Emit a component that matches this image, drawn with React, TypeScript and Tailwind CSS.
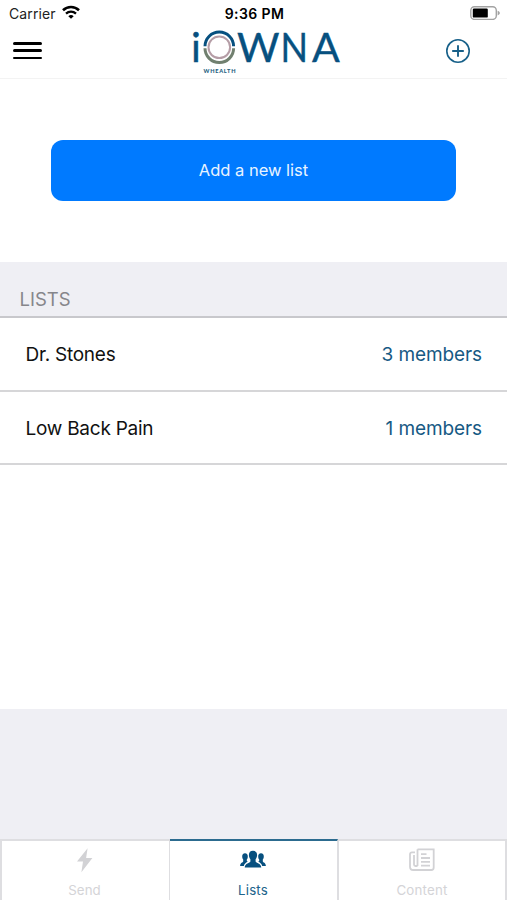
const StatusBar = () => {
  return (
    <div className="grid grid-cols-3 items-center h-[27px] pl-[9px] pr-[7px] text-[14px] text-[#222]">
      <div className="flex items-center gap-[6px]">
        <span className="tracking-[0.1px]">Carrier</span>
        <svg width="18" height="14" viewBox="0 0 18 14" className="-mt-[3px]" fill="none" stroke="#000">
          <path d="M1 5.2a11.6 11.6 0 0 1 16 0" strokeWidth="2.6" />
          <path d="M4 8.6a7.4 7.4 0 0 1 10 0" strokeWidth="2.3" />
          <path d="M9 13.8 6.3 11.2a4 4 0 0 1 5.4 0z" fill="#000" stroke="none" />
        </svg>
      </div>
      <div className="text-center font-semibold text-black tracking-[0.4px]">9:36 PM</div>
      <div className="flex justify-end">
        <svg width="30" height="14" viewBox="0 0 30 14" className="-mt-[2px]">
          <rect x="0.8" y="0.8" width="25.5" height="12.6" rx="3.6" fill="#fff" stroke="#a3a3a3" strokeWidth="1.4" />
          <rect x="2.8" y="2.6" width="15" height="9" rx="1.2" fill="#000" />
          <path d="M27.6 4.8c1.7.5 2.2 1.4 2.2 2.3s-.5 1.8-2.2 2.3z" fill="#a3a3a3" />
        </svg>
      </div>
    </div>
  )
}

const Logo = () => {
  return (
    <svg width="152" height="60" viewBox="0 -9 152 60" className="font-['Lato']">
      <g fill="#07507f" stroke="#07507f" strokeWidth="0.4" fontSize="41">
        <text x="0.1" y="33">i</text>
        <text x="46" y="33">W</text>
        <text x="89.5" y="33" textLength="27.5" lengthAdjust="spacingAndGlyphs">N</text>
        <text x="121" y="33">A</text>
      </g>
      <g fill="none">
        <path d="M14 17.3a14.3 14.3 0 0 1 28.6 0" stroke="#07507f" strokeWidth="3" />
        <path d="M14 19.3a14.3 14.3 0 0 0 28.6 0" stroke="#71806f" strokeWidth="3" />
        <circle cx="28.3" cy="18.3" r="10.8" stroke="#b59da6" strokeWidth="2" />
      </g>
      <text x="12.5" y="44.4" fontSize="5.6" fontWeight="900" fill="#246080" textLength="32">WHEALTH</text>
    </svg>
  )
}

const Header = () => {
  return (
    <div className="flex justify-between h-[52px] border-b border-[#f3f3f3] pl-[13px] pr-[36px]">
      <div className="flex flex-col gap-[4.7px] w-[62px] pt-[15px]">
        <div className="w-[29px] h-[2.6px] rounded-full bg-black" />
        <div className="w-[29px] h-[2.6px] rounded-full bg-black" />
        <div className="w-[29px] h-[2.6px] rounded-full bg-black" />
      </div>
      <div className="-mt-[7px] pl-[50px]">
        <Logo />
      </div>
      <div className="flex justify-end w-[62px] pt-[11px]">
        <svg width="26" height="26" viewBox="0 0 26 26" fill="none" stroke="#176089">
          <circle cx="13" cy="13" r="11.2" strokeWidth="1.6" />
          <path d="M13 7.2v11.6M7.2 13h11.6" strokeWidth="1.9" />
        </svg>
      </div>
    </div>
  )
}

const ListRow = ({ name, members }: { name: string; members: number }) => {
  return (
    <div className="flex justify-between items-center h-[73.5px] pl-[25.5px] pr-[25px] pt-[3px] border-b-2 border-[#d6d6d8] text-[19px]">
      <span className="text-[#111] tracking-[-0.25px]">{name}</span>
      <span className="text-[#175a84] tracking-[-0.1px]">{members} members</span>
    </div>
  )
}

const FlashIcon = () => (
  <svg width="26" height="26" viewBox="0 0 26 26" fill="#d2d2d5">
    <path d="M15.6 1.2 5 14.6h6L9.4 25.2 20.4 11h-6.3z" />
  </svg>
)

const PeopleIcon = () => (
  <svg width="26" height="26" viewBox="0 0 26 26" fill="#07507f">
    <path d="M13 3.8c-2.7 0-4.2 1.7-4.1 4.4.1 1.900.7 3 1.500 4v2.300c-.5 1.500-5.400 1.600-5.700 6.100h16.600c-.3-4.500-5.200-4.600-5.700-6.100v-2.300c.8-1 1.400-2.100 1.500-4 .1-2.700-1.400-4.400-4.100-4.400z" />
    <path d="M5 6.200c-1.900 0-2.900 1.300-2.800 3.500.1 1.400.5 2.200 1 2.900v1.900C2.900 15.500.3 15.600.1 18.900h3.700c.7-2.500 2.400-3.500 4-4.200-.6-.2-.9-.5-1-.9v-1.200c.6-.7.9-1.500 1-2.900.1-2.200-.9-3.500-2.800-3.500z" />
    <path d="M21 6.200c1.900 0 2.900 1.300 2.800 3.500-.1 1.400-.5 2.200-1 2.900v1.900c.3 1 2.900 1.100 3.100 4.400h-3.700c-.7-2.500-2.400-3.500-4-4.200.6-.2.9-.5 1-.9v-1.200c-.6-.7-.9-1.500-1-2.900-.1-2.200.9-3.500 2.800-3.500z" />
  </svg>
)

const PaperIcon = () => (
  <svg width="26" height="26" viewBox="0 0 26 26" fill="none" stroke="#d2d2d5" strokeWidth="1.8">
    <path d="M8.5 2.3h16.2v18.2c0 1.500-.9 2.500-2.400 2.500H4.300c-2 0-3.300-1.300-3.300-3.300V7.300c0-1.300.7-2 2-2h3" />
    <path d="M8.500 2.300v16.700M5 8v9.500c0 1 .5 1.500 1.500 1.500h2M12 7.200h5.500M12 11h9M12 14.800h9M12 18.600h9" />
  </svg>
)

const TabBar = () => {
  return (
    <div className="grid grid-cols-[170px_168px_169px] h-[61px] bg-white text-[13.3px] text-[#d4d4d7]">
      <div className="flex flex-col items-center pt-[6px] pr-[2px] border-t-2 border-l-2 border-r border-[#dedee1]">
        <FlashIcon />
        <span className="mt-[7px] leading-[20px] tracking-[0.1px]">Send</span>
      </div>
      <div className="flex flex-col items-center pt-[6px] pr-[1px] border-t-2 border-t-[#2c6b8f] border-r border-r-[#dedee1] text-[#20638b]">
        <PeopleIcon />
        <span className="mt-[7px] leading-[20px] tracking-[0.2px]">Lists</span>
      </div>
      <div className="flex flex-col items-center pt-[6px] border-t-2 border-l border-r-2 border-[#dedee1]">
        <PaperIcon />
        <span className="mt-[7px] leading-[20px] tracking-[0.2px]">Content</span>
      </div>
    </div>
  )
}

export default function App() {
  return (
    <div className="flex flex-col w-[507px] h-[900px] overflow-hidden bg-[#efeff4] font-['Inter',sans-serif]">
      <div className="bg-white">
        <StatusBar />
        <Header />
        <div className="h-[183px] px-[51px] pt-[61px]">
          <button className="w-full h-[61px] rounded-[12px] bg-[#007aff] text-[16.5px] text-[#e9f4ff]">
            Add a new list
          </button>
        </div>
      </div>
      <div className="h-[56px] pl-[19.5px] pt-[24px] border-b-2 border-[#c8c8cc] text-[18.5px] leading-[26px] text-[#86868b]">
        LISTS
      </div>
      <div className="h-[391px] bg-white">
        <ListRow name="Dr. Stones" members={3} />
        <ListRow name="Low Back Pain" members={1} />
      </div>
      <div className="flex-1" />
      <TabBar />
    </div>
  )
}
